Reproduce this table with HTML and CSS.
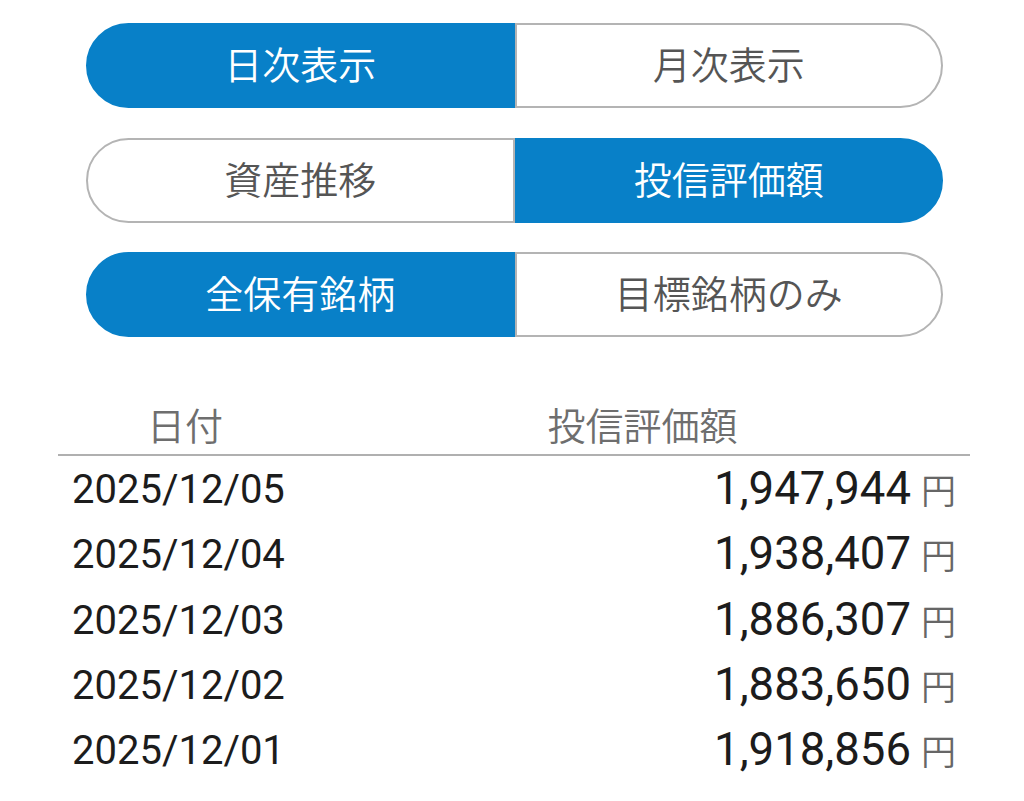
FILE: index.html
```html
<!DOCTYPE html>
<html lang="ja">
<head>
<meta charset="utf-8">
<link rel="stylesheet" href="styles.css">
</head>
<body>
<div class="page">
  <div class="toggles">
    <div class="toggle">
      <div class="seg left active">日次表示</div>
      <div class="seg right">月次表示</div>
    </div>
    <div class="toggle">
      <div class="seg left">資産推移</div>
      <div class="seg right active">投信評価額</div>
    </div>
    <div class="toggle">
      <div class="seg left active">全保有銘柄</div>
      <div class="seg right">目標銘柄のみ</div>
    </div>
  </div>
  <div class="table">
    <div class="thead">
      <div class="th date-col">日付</div>
      <div class="th val-col">投信評価額</div>
    </div>
    <div class="row"><span class="date">2025/12/05</span><span class="amt"><span class="num">1,947,944</span><span class="yen">円</span></span></div>
    <div class="row"><span class="date">2025/12/04</span><span class="amt"><span class="num">1,938,407</span><span class="yen">円</span></span></div>
    <div class="row"><span class="date">2025/12/03</span><span class="amt"><span class="num">1,886,307</span><span class="yen">円</span></span></div>
    <div class="row"><span class="date">2025/12/02</span><span class="amt"><span class="num">1,883,650</span><span class="yen">円</span></span></div>
    <div class="row"><span class="date">2025/12/01</span><span class="amt"><span class="num">1,918,856</span><span class="yen">円</span></span></div>
  </div>
</div>
</body>
</html>
```
FILE: styles.css
```css
html, body {
  margin: 0;
  padding: 0;
  background: #ffffff;
}
body {
  font-family: Roboto, "Noto Sans CJK JP", sans-serif;
  width: 1024px;
  height: 801px;
  overflow: hidden;
}
.page {
  padding-top: 23px;
}
.toggles {
  display: flex;
  flex-direction: column;
  gap: 29.5px;
  margin-left: 86px;
  width: 857px;
}
.toggle {
  display: flex;
  height: 85px;
}
.seg {
  flex: 1;
  box-sizing: border-box;
  border: 2px solid #b4b4b4;
  background: #ffffff;
  color: #555555;
  font-family: "Noto Sans CJK JP", sans-serif;
  font-weight: 350;
  font-size: 38px;
  display: flex;
  align-items: center;
  justify-content: center;
  padding-bottom: 6px;
}
.seg.left {
  border-radius: 43px 0 0 43px;
}
.seg.right {
  border-radius: 0 43px 43px 0;
}
.seg.active {
  background: #0880c8;
  border-color: #0880c8;
  color: #ffffff;
}
.table {
  margin-top: 41px;
  margin-left: 58px;
  width: 912px;
}
.thead {
  display: flex;
  height: 78px;
  box-sizing: border-box;
  border-bottom: 2px solid #b0b0b0;
}
.th {
  font-family: "Noto Sans CJK JP", sans-serif;
  font-weight: 350;
  font-size: 38px;
  color: #6e6e6e;
  display: flex;
  align-items: center;
  justify-content: center;
  padding-top: 14px;
}
.date-col {
  width: 254px;
}
.val-col {
  flex: 1;
  padding-left: 3px;
}
.row {
  display: flex;
  align-items: center;
  justify-content: space-between;
  height: 65.3px;
  padding: 0 14px;
}
.date {
  font-size: 40px;
  color: #1c1c1c;
  margin-top: 2px;
}
.amt {
  display: flex;
  align-items: baseline;
  gap: 10px;
}
.num {
  font-size: 45.5px;
  color: #1c1c1c;
}
.yen {
  font-family: "Noto Sans CJK JP", sans-serif;
  font-weight: 350;
  font-size: 35px;
  color: #666666;
}
```
